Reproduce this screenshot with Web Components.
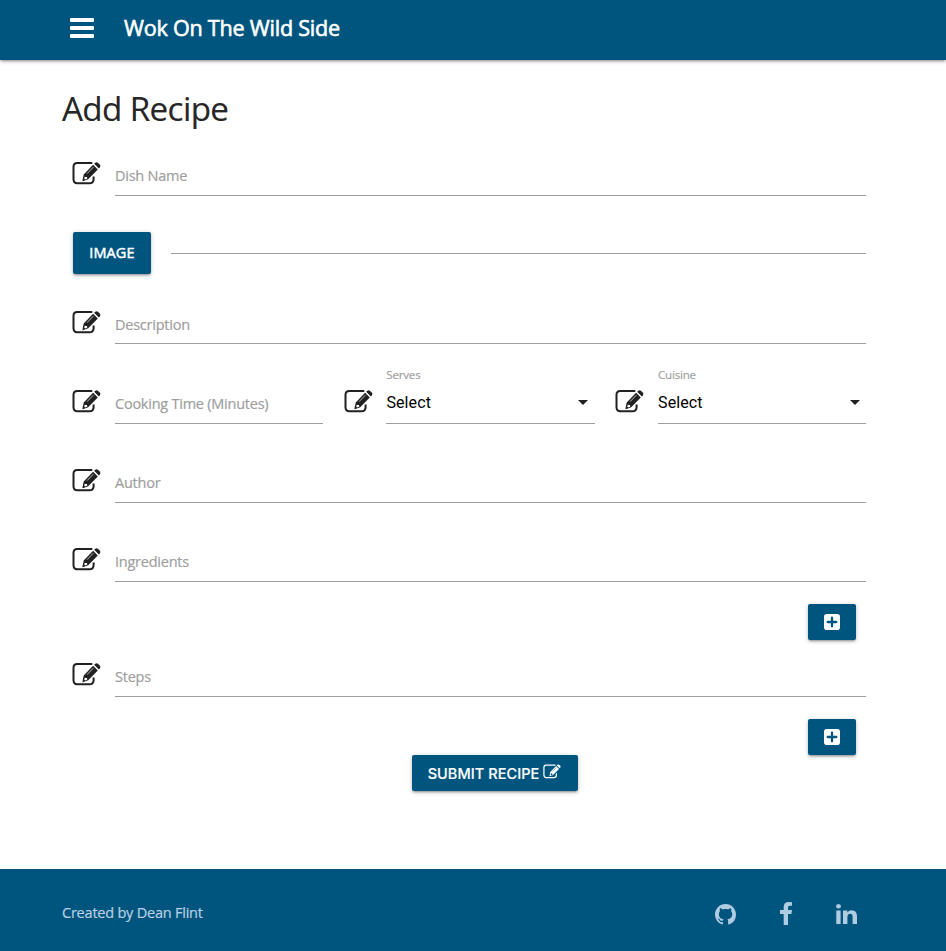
<!DOCTYPE html>
<html lang="en"><head><meta charset="utf-8"><title>Wok On The Wild Side</title>
<style>html,body{margin:0;background:#fff}body{font-family:"Open Sans","Liberation Sans",sans-serif;font-size:14.5px;color:rgba(0,0,0,.87)}</style></head>
<body><recipe-page></recipe-page>
<script>
const define=(name,html)=>{
  const t=document.createElement('template');t.innerHTML=html;
  customElements.define(name,class extends HTMLElement{
    connectedCallback(){ if(!this.shadowRoot) this.attachShadow({mode:'open'}).append(t.content.cloneNode(true)); }
  });
};
define('edit-icon',`<style>:host{display:block;width:29px;height:23px;color:#212121}svg{display:block;width:100%;height:100%;overflow:visible}</style>
<svg viewBox="0 0 29 23" fill="none"><path d="M20.3 1.1H5.2Q1.5 1.1 1.5 4.8V17.3Q1.5 21.3 5.3 21.3H17.4Q21.6 21.3 21.6 17.2V14.4" stroke="currentColor" stroke-width="2" stroke-linecap="butt"/>
<path fill="currentColor" fill-rule="evenodd" d="M21.1 2.7 25.8 7.4 16.2 17.2 10.8 19.2 10.4 18.8 11.7 12.5ZM12.9 14.4 12.2 16.6 13.1 17.5 15.3 16.6 15 15 13.5 14.9Z"/>
<path fill="currentColor" d="M22.1 1.8 23.3.7Q24.7-.3 25.9.7L28 2.8Q28.9 3.9 27.9 5.2L26.9 6.4Z"/><path d="M15.1 11.6 21.3 5.2" stroke="var(--gap,#fff)" stroke-width=".7"/></svg>`);
define('app-header',`<style>:host{display:flex;align-items:center;height:60px;box-sizing:border-box;padding:0 0 4px 70px;background:#00557f;color:#fff;box-shadow:0 2px 2px rgba(0,0,0,.14),0 3px 1px -2px rgba(0,0,0,.12),0 1px 5px rgba(0,0,0,.2)}
svg{width:24px;height:20px;margin-right:30px}span{font-size:21.6px;font-weight:400;line-height:30px;letter-spacing:-.24px;-webkit-text-stroke:.6px #fff}</style>
<svg viewBox="0 0 24 20" fill="#fff"><rect width="24" height="4" rx="1"/><rect y="8" width="24" height="4" rx="1"/><rect y="16" width="24" height="4" rx="1"/></svg><span><slot></slot></span>`);
define('form-field',`<style>:host{display:flex;align-items:flex-start;height:52px;box-sizing:border-box;padding:17.5px 11px 0 10px}
edit-icon{flex:none;margin:var(--drop,0) 14px 0 0}div{flex:1;height:34.5px;box-sizing:border-box;border-bottom:1px solid #9e9e9e;color:#9e9e9e;line-height:20px;padding-top:calc(4px + var(--drop,0px));white-space:nowrap;letter-spacing:-.24px;-webkit-text-stroke:.2px #9e9e9e}</style><edit-icon></edit-icon><div><slot></slot></div>`);
define('select-field',`<style>:host{display:grid;grid-template-columns:42.6px 1fr;grid-template-rows:16px 36px;height:60px;box-sizing:border-box;padding:2px 10.6px 0 10px;color:#9e9e9e;font-size:11.6px;line-height:18px}
label{grid-column:2;letter-spacing:-.2px;-webkit-text-stroke:.15px #9e9e9e}edit-icon{margin-top:7.5px}div{display:flex;justify-content:space-between;align-items:center;height:42px;box-sizing:border-box;border-bottom:1px solid #9e9e9e;font:16px Roboto,sans-serif;letter-spacing:.1px;color:#000;padding:0 6.6px 0 .2px}
svg{width:10px;height:5px}</style><label><slot></slot></label><edit-icon></edit-icon><div><span>Select</span><svg viewBox="0 0 10 5"><path d="M0 0h10L5 5z" fill="#212121"/></svg></div>`);
define('raised-button',`<style>:host{display:flex;align-items:center;justify-content:center;box-sizing:border-box;height:36px;background:#00557f;color:#fff;border-radius:2px;box-shadow:0 2px 2px rgba(0,0,0,.14),0 3px 1px -2px rgba(0,0,0,.12),0 1px 5px rgba(0,0,0,.2);white-space:nowrap}</style><slot></slot>`);
define('plus-icon',`<style>:host{display:block;width:16px;height:16px}svg{display:block}</style><svg width="16" height="16"><rect width="16" height="16" rx="2.8" fill="#fff"/><path d="M3.7 8h8.6M8 3.7v8.6" stroke="#00557f" stroke-width="2.3" stroke-linecap="round"/></svg>`);
define('recipe-form',`<style>:host{display:flex;flex-direction:column;padding:27px 69px 0 62px;height:809px;box-sizing:border-box}
h1{font-size:33.2px;font-weight:400;line-height:44px;margin:0 0 13px;letter-spacing:-.62px;-webkit-text-stroke:.2px currentColor}
.file{display:flex;align-items:center;gap:20px;margin:36px 11px 18px;height:42px}
.file raised-button{width:78px;height:42px;padding-bottom:2px;font-size:14.5px;letter-spacing:.1px;-webkit-text-stroke:.5px #fff}.file i{flex:1;height:1px;background:#9e9e9e}
.trio{display:grid;grid-template-columns:repeat(3,1fr);align-items:end;height:60px;margin:20px 0 27px}
.add{width:48px;margin:22px 21px 0 auto;padding-bottom:1px}.submit{width:166px;align-self:flex-start;margin-left:350px;font:500 14.5px Inter,sans-serif;gap:4px}
.submit span{letter-spacing:.06px;margin-left:-1px;-webkit-text-stroke:.15px #fff}
.submit edit-icon{width:18px;height:15px;color:#fff;--gap:#00557f;margin-top:-4px}</style>
<h1>Add Recipe</h1><form-field>Dish Name</form-field>
<div class="file"><raised-button>IMAGE</raised-button><i></i></div>
<form-field style="--drop:1px">Description</form-field>
<div class="trio"><form-field>Cooking Time (Minutes)</form-field><select-field>Serves</select-field><select-field>Cuisine</select-field></div>
<form-field>Author</form-field><form-field style="margin-top:27px">Ingredients</form-field>
<raised-button class="add"><plus-icon></plus-icon></raised-button><form-field style="margin-top:5px">Steps</form-field>
<raised-button class="add"><plus-icon></plus-icon></raised-button><raised-button class="submit"><span>SUBMIT RECIPE</span><edit-icon></edit-icon></raised-button>`);
define('app-footer',`<style>:host{display:flex;justify-content:space-between;align-items:center;box-sizing:border-box;height:82px;background:#00557f;padding:5px 89px 0 62px;color:#b9d0e2}
span{line-height:20px;letter-spacing:-.22px;-webkit-text-stroke:.2px currentColor}nav{display:flex;align-items:center;color:#b0cce1;margin-top:3px}svg{fill:currentColor;display:block}</style><span><slot></slot></span>
<nav><svg width="21" height="21" viewBox="0 0 16 16"><path d="M8 0C3.58 0 0 3.58 0 8c0 3.54 2.29 6.53 5.47 7.59.4.07.55-.17.55-.38 0-.19-.01-.82-.01-1.49-2.01.37-2.53-.49-2.69-.94-.09-.23-.48-.94-.82-1.13-.28-.15-.68-.52-.01-.53.63-.01 1.08.58 1.23.82.72 1.21 1.87.87 2.33.66.07-.52.28-.87.51-1.07-1.78-.2-3.64-.89-3.64-3.95 0-.87.31-1.59.82-2.15-.08-.2-.36-1.02.08-2.12 0 0 .67-.21 2.2.82.64-.18 1.32-.27 2-.27s1.36.09 2 .27c1.53-1.04 2.2-.82 2.2-.82.44 1.1.16 1.92.08 2.12.51.56.82 1.27.82 2.15 0 3.07-1.87 3.75-3.65 3.95.29.25.54.73.54 1.48 0 1.07-.01 1.93-.01 2.2 0 .21.15.46.55.38A8.01 8.01 0 0 0 16 8c0-4.42-3.58-8-8-8z"/></svg>
<svg style="margin:-2px 44px 0" width="12" height="23" viewBox="0 0 12 23"><path d="M12 .2v3.6H9.8Q8 3.8 8 5.5V8h4l-.6 4H8v11H3.7V12H0V8h3.7V5.1Q3.7 0 8.9 0Q11 0 12 .2z"/></svg>
<svg width="21" height="20" viewBox="0 0 21 20"><path d="M.3 6.5h4.3V20H.3zM2.5 0Q5 .2 5 2.3T2.4 4.6Q0 4.4 0 2.3T2.5 0zM7 6.5h4.3v2q1.5-2.3 4.3-2.3Q21 6.2 21 12.4V20h-4.4v-7.2q0-3-2.3-3-2.9 0-2.9 3.4V20H7z"/></svg></nav>`);
define('recipe-page',`<style>:host{display:block;height:951px}</style><app-header>Wok On The Wild Side</app-header><recipe-form></recipe-form><app-footer>Created by Dean Flint</app-footer>`);
</script></body></html>
